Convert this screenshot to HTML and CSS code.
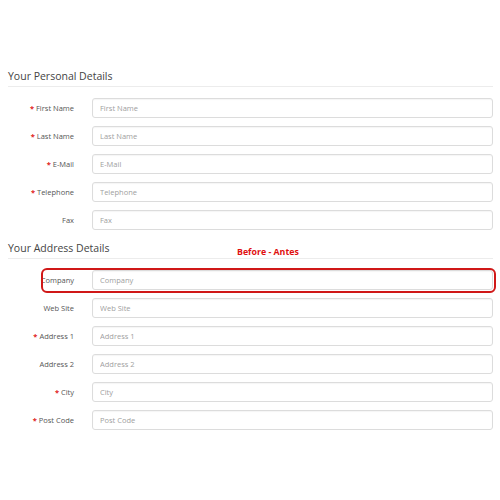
FILE: index.html
```html
<!DOCTYPE html>
<html lang="en">
<head>
    <meta charset="UTF-8">
    <meta name="viewport" content="width=device-width, initial-scale=1.0">
    <title>Register Account</title>
    <link rel="stylesheet" href="styles.css">
</head>
<body>
    <main class="page">
        <section class="group">
            <h2 class="group-title">Your Personal Details</h2>
            <div class="row">
                <label class="required" for="firstname">First Name</label>
                <input type="text" id="firstname" placeholder="First Name">
            </div>
            <div class="row">
                <label class="required" for="lastname">Last Name</label>
                <input type="text" id="lastname" placeholder="Last Name">
            </div>
            <div class="row">
                <label class="required" for="email">E-Mail</label>
                <input type="text" id="email" placeholder="E-Mail">
            </div>
            <div class="row">
                <label class="required" for="telephone">Telephone</label>
                <input type="text" id="telephone" placeholder="Telephone">
            </div>
            <div class="row">
                <label for="fax">Fax</label>
                <input type="text" id="fax" placeholder="Fax">
            </div>
        </section>

        <section class="group">
            <h2 class="group-title">Your Address Details <span class="note">Before - Antes</span></h2>
            <div class="row highlight">
                <label for="company">Company</label>
                <input type="text" id="company" placeholder="Company">
            </div>
            <div class="row">
                <label for="website">Web Site</label>
                <input type="text" id="website" placeholder="Web Site">
            </div>
            <div class="row">
                <label class="required" for="address1">Address 1</label>
                <input type="text" id="address1" placeholder="Address 1">
            </div>
            <div class="row">
                <label for="address2">Address 2</label>
                <input type="text" id="address2" placeholder="Address 2">
            </div>
            <div class="row">
                <label class="required" for="city">City</label>
                <input type="text" id="city" placeholder="City">
            </div>
            <div class="row">
                <label class="required" for="postcode">Post Code</label>
                <input type="text" id="postcode" placeholder="Post Code">
            </div>
        </section>
    </main>
</body>
</html>
```

FILE: styles.css
```css
body {
    margin: 0;
    background-color: #fff;
    font-family: "Open Sans", "Liberation Sans", sans-serif;
    color: #555;
}
.page {
    padding: 69px 7px 0 8px;
}
.group {
    display: flex;
    flex-direction: column;
    gap: 8px;
}
.group + .group {
    margin-top: 11px;
}
.group-title {
    position: relative;
    margin: 0 0 3px 0;
    padding: 0 0 3px 0;
    font-size: 10.5px;
    font-weight: normal;
    line-height: 14px;
    color: #444;
    border-bottom: 1px solid #ececec;
}
.note {
    position: absolute;
    left: 229px;
    top: 6px;
    font-size: 8.8px;
    line-height: 10px;
    font-weight: bold;
    color: #e01010;
}
.row {
    display: grid;
    grid-template-columns: 66px 1fr;
    column-gap: 18px;
    align-items: center;
    position: relative;
}
.row label {
    text-align: right;
    font-size: 7.5px;
    color: #555;
}
.row label.required::before {
    content: "* ";
    color: #e02020;
    font-weight: bold;
}
.row input {
    height: 20px;
    box-sizing: border-box;
    padding: 0 7px;
    font-family: inherit;
    font-size: 7.5px;
    color: #555;
    border: 1px solid #dcdcdc;
    border-radius: 3px;
    box-shadow: inset 0 1px 1px rgba(0,0,0,0.04);
}
.row input::placeholder {
    color: #a0a0a0;
}
.highlight::after {
    content: "";
    position: absolute;
    left: 33px;
    right: -3px;
    top: -2px;
    bottom: -3px;
    border: 2px solid #d01818;
    border-radius: 6px;
    pointer-events: none;
}
```
